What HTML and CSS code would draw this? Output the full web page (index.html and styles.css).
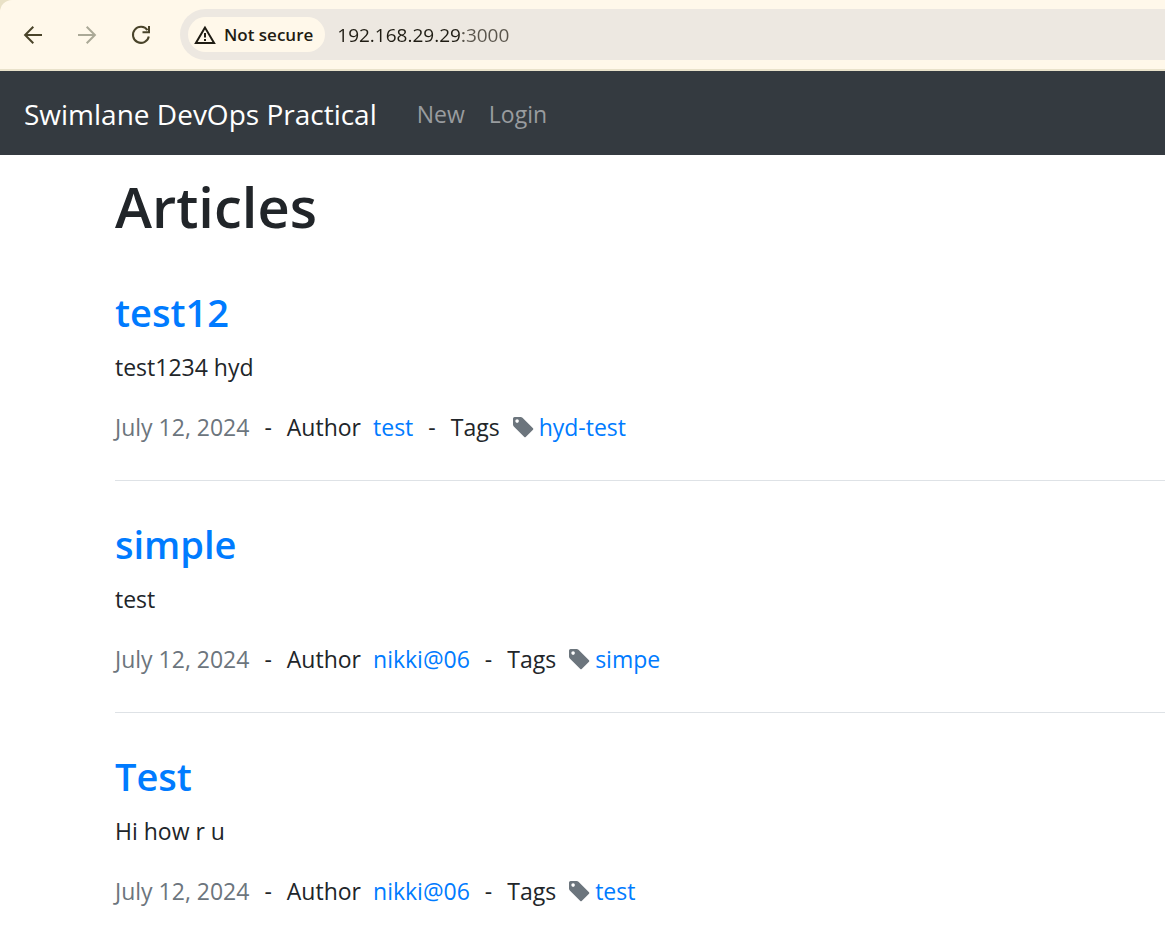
FILE: index.html
```html
<!DOCTYPE html>
<html lang="en">
<head>
<meta charset="utf-8">
<title>Articles</title>
<link rel="stylesheet" href="styles.css">
</head>
<body>
<svg class="symbols" aria-hidden="true">
  <symbol id="tag" viewBox="0 0 22 22"><path fill-rule="evenodd" d="M1 2.6Q1 1 2.6 1H8.6Q9.7 1 10.5 1.8L21 12.3Q21.7 13 21 13.7L13.7 21Q13 21.7 12.3 21L1.8 10.5Q1 9.7 1 8.6ZM5.1 3.3a1.8 1.8 0 1 0 0 3.6a1.8 1.8 0 1 0 0-3.6Z"/></symbol>
</svg>
<div class="frame">
  <div class="toolbar">
    <button class="tool" type="button" aria-label="Back"><svg viewBox="0 0 20 20"><path d="M19 10H2.5M10.3 1.8L2.1 10l8.2 8.2"/></svg></button>
    <button class="tool tool-off" type="button" aria-label="Forward" disabled><svg viewBox="0 0 20 20"><path d="M1 10h16.5M9.7 1.8l8.2 8.2-8.2 8.2"/></svg></button>
    <button class="tool" type="button" aria-label="Reload"><svg viewBox="0 0 20 20"><path d="M16.5 5.2A8 8 0 1 0 17.8 11.5M18 1v6.3h-6.5"/></svg></button>
    <div class="address">
      <button class="security" type="button"><svg viewBox="0 0 22 20"><path d="M11 2.6L1.9 18h18.2Z"/><path d="M11 8v4.5M11 14v2"/></svg>Not secure</button>
      <input class="url" type="text" aria-label="Address" value="192.168.29.29:3000" spellcheck="false">
    </div>
  </div>
</div>
<nav class="navbar">
  <a class="brand" href="#">Swimlane DevOps Practical</a>
  <a class="nav-link" href="#">New</a>
  <a class="nav-link" href="#">Login</a>
</nav>
<main class="content">
  <h1 class="heading">Articles</h1>
  <article class="article">
    <h2 class="title"><a href="#">test12</a></h2>
    <p class="text">test1234 hyd</p>
    <p class="meta"><span class="date">July 12, 2024</span><span class="dash">-</span><span>Author</span><a href="#">test</a><span class="dash">-</span><span>Tags</span><span class="tag"><svg><use href="#tag"/></svg><a href="#">hyd-test</a></span></p>
  </article>
  <article class="article">
    <h2 class="title"><a href="#">simple</a></h2>
    <p class="text">test</p>
    <p class="meta"><span class="date">July 12, 2024</span><span class="dash">-</span><span>Author</span><a href="#">nikki@06</a><span class="dash">-</span><span>Tags</span><span class="tag"><svg><use href="#tag"/></svg><a href="#">simpe</a></span></p>
  </article>
  <article class="article">
    <h2 class="title"><a href="#">Test</a></h2>
    <p class="text">Hi how r u</p>
    <p class="meta"><span class="date">July 12, 2024</span><span class="dash">-</span><span>Author</span><a href="#">nikki@06</a><span class="dash">-</span><span>Tags</span><span class="tag"><svg><use href="#tag"/></svg><a href="#">test</a></span></p>
  </article>
</main>
</body>
</html>
```
FILE: styles.css
```css
* { box-sizing: border-box; }
body {
  margin: 0;
  background: #fff;
  color: #212529;
  font: 23px/36px "Open Sans", "Noto Sans", sans-serif;
}
a { color: #007bff; text-decoration: none; }
h1, h2, p { margin: 0; }
button, input { border: 0; padding: 0; margin: 0; background: none; font: inherit; }
.symbols { display: none; }

.frame { background: #e9e1c6; }
.toolbar {
  display: flex;
  align-items: center;
  height: 71px;
  padding-left: 22px;
  gap: 32px;
  background: #fff8ea;
  border-bottom: 2px solid #e9e2cb;
  border-top-left-radius: 12px;
}
.tool { display: flex; flex: none; color: #4a442a; }
.tool svg { width: 22px; height: 20px; fill: none; stroke: currentColor; stroke-width: 2; }
.tool-off { color: #aba997; }
.address {
  display: flex;
  align-items: center;
  flex: 1;
  min-width: 0;
  height: 51px;
  margin-left: -4px;
  padding-left: 8px;
  gap: 12px;
  background: #ede8e1;
  border-radius: 26px 0 0 26px;
}
.security {
  display: flex;
  align-items: center;
  flex: none;
  height: 35px;
  padding: 0 12px 0 6px;
  gap: 8px;
  border-radius: 18px;
  background: #fff8ea;
  color: #1f1c13;
  font-size: 17px;
  font-weight: 600;
}
.security svg { width: 22px; height: 20px; fill: none; stroke: #1f1c13; stroke-width: 2; }
.url {
  flex: 1;
  min-width: 0;
  height: 35px;
  color: transparent;
  background: linear-gradient(90deg, #1f1c13 126px, #5a554c 126px) text;
  font-size: 19px;
}

.navbar {
  display: flex;
  align-items: center;
  min-height: 84px;
  padding: 2px 24px 0;
  gap: 24px;
  background: #343a40;
  line-height: 44px;
}
.brand { margin-right: 16px; color: #fff; font-size: 28px; }
.nav-link { color: #999c9f; }

.content { padding: 15px 0 32px 115px; }
.heading { margin-bottom: 45px; font-size: 56px; line-height: 72px; font-weight: 600; }
.article + .article { margin-top: 38px; }
.article:not(:last-child) { padding-bottom: 35px; border-bottom: 1px solid #dee2e6; }
.title { margin-bottom: 12px; font-size: 38px; line-height: 50px; font-weight: 600; }
.text { margin-bottom: 24px; }
.meta { display: flex; flex-wrap: wrap; gap: 0 12px; }
.dash { padding: 0 3px; }
.date { color: #6c757d; }
.tag { display: flex; align-items: center; gap: 5px; }
.tag svg { width: 22px; height: 22px; fill: #6c757d; }
```
